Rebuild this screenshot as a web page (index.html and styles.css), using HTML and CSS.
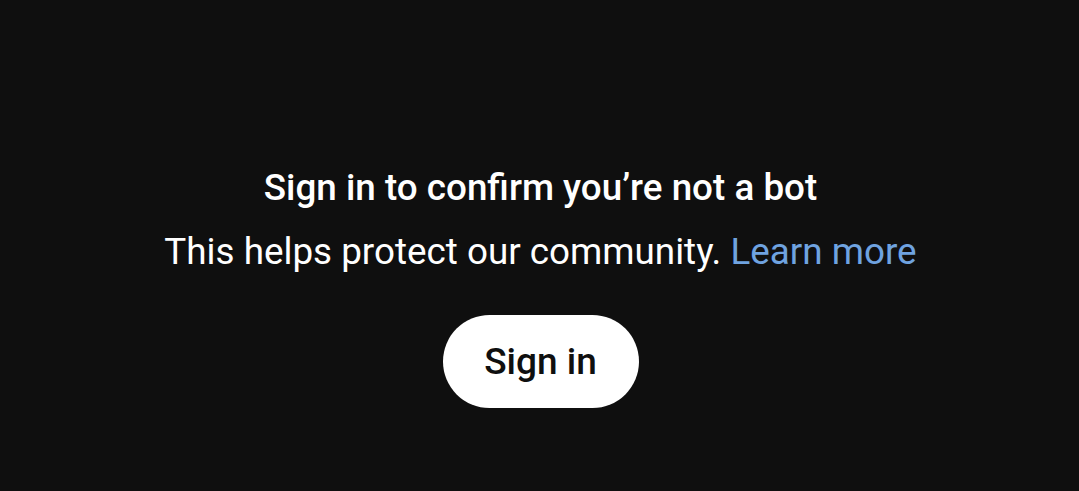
FILE: index.html
```html
<!DOCTYPE html>
<html lang="en">
<head>
  <meta charset="UTF-8" />
  <title>Sign in to confirm you're not a bot</title>
  <link rel="stylesheet" href="styles.css">
</head>
<body>
  <div class="bot-check">
    <h1 class="title">Sign in to confirm you’re not a bot</h1>
    <p class="subtitle">This helps protect our community. <a href="#">Learn more</a></p>
    <button class="sign-in">Sign in</button>
  </div>
</body>
</html>
```
FILE: styles.css
```css
* { box-sizing: border-box; margin: 0; padding: 0; }
html, body { height: 100%; }
body {
  background-color: #0f0f0f;
  font-family: Roboto, 'Noto Sans', sans-serif;
  color: #fff;
}
.bot-check {
  display: flex;
  flex-direction: column;
  align-items: center;
  padding-top: 166px;
  padding-left: 2px;
}
.title {
  font-size: 36.8px;
  font-weight: 500;
  line-height: 44px;
}
.subtitle {
  font-size: 36.8px;
  line-height: 44px;
  margin-top: 20px;
}
.subtitle a {
  color: #6fa3e0;
  text-decoration: none;
}
.sign-in {
  margin-top: 41px;
  width: 196px;
  height: 93px;
  border: none;
  border-radius: 47px;
  background: #fff;
  color: #0f0f0f;
  font-family: inherit;
  font-size: 37px;
  font-weight: 500;
  cursor: pointer;
}
```
